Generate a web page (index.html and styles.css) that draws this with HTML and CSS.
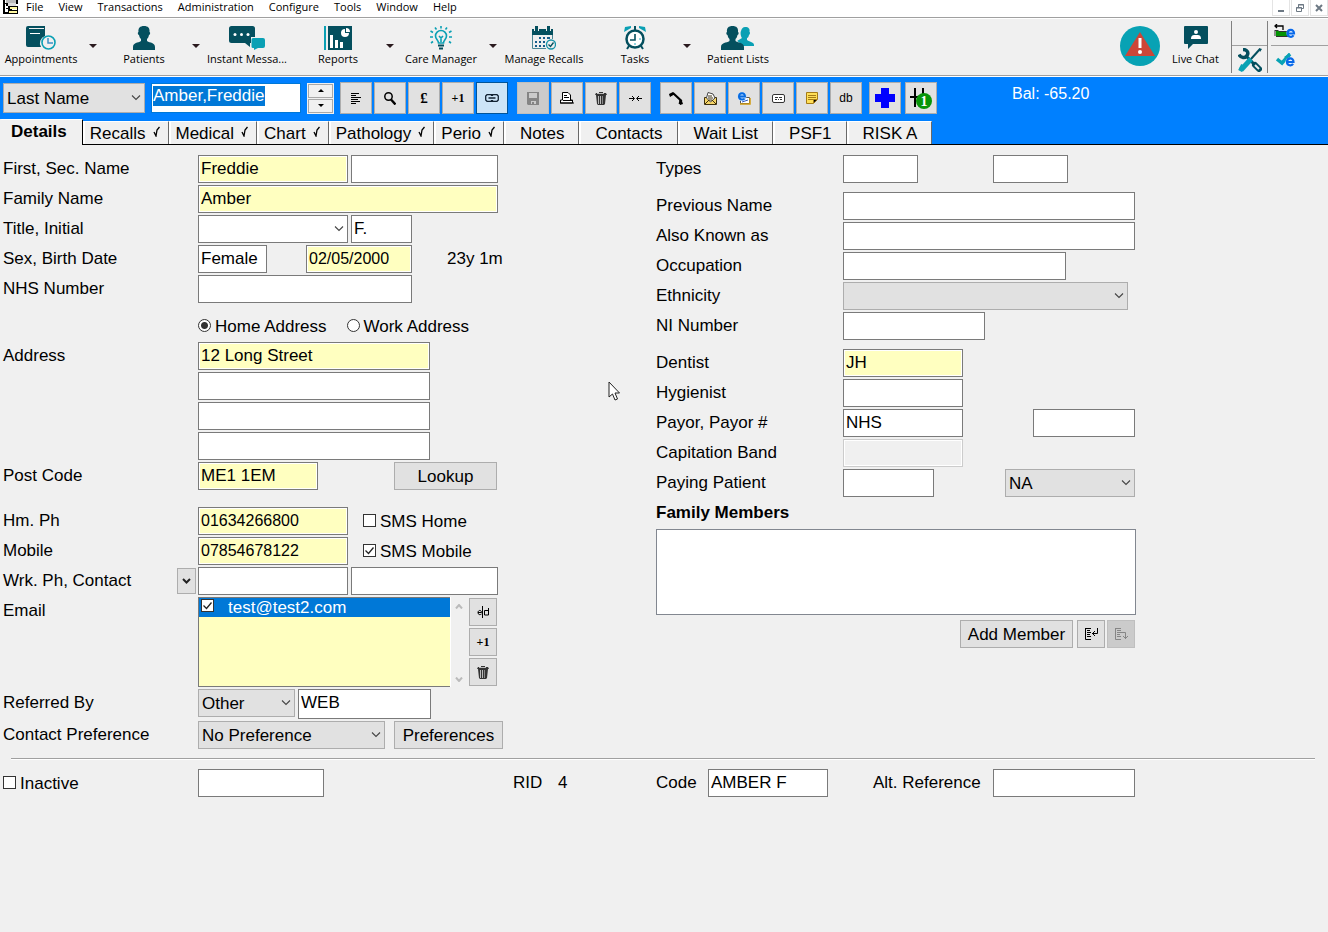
FILE: index.html
```html
<!DOCTYPE html>
<html lang="en">
<head>
<meta charset="utf-8">
<meta name="viewport" content="width=device-width, initial-scale=1">
<title>Patient Details</title>
<link rel="stylesheet" href="styles.css">
</head>
<body>
<header>
  <nav class="menubar" aria-label="Main menu">
    <svg class="app-icon" width="16" height="14" viewBox="0 0 16 14" shape-rendering="crispEdges"><path fill="#000" d="M0 0h2v12h3v2H0zM2 3h3v1H2zM5 6h10v8H5z"/><path fill="#bbb" d="M3 0h10v3H3z"/><path fill="#fff" d="M2 4h3v8H2z"/><path fill="#000" d="M3 3h2v3H3zM13 0h2v4h-2zM3 8h2v1H3z"/><path fill="#ddd" d="M5 3h8v3H5z"/><path fill="#fff8a0" d="M7 7h7v2H7zM6 11h8v2H6z"/><path fill="#fff" d="M9 9h5v1H9z"/></svg>
    <button type="button">File</button><button type="button">View</button><button type="button">Transactions</button><button type="button">Administration</button><button type="button">Configure</button><button type="button">Tools</button><button type="button">Window</button><button type="button">Help</button>
    <span class="window-buttons">
      <button type="button" aria-label="Minimise"><svg width="8" height="8" viewBox="0 0 8 8"><path d="M1 6h6v2H1z" fill="#6d7984"/></svg></button>
      <button type="button" aria-label="Restore"><svg width="8" height="8" viewBox="0 0 8 8" fill="none" stroke="#6d7984"><path d="M2.500 3V.5h5v4H6M2 1h6M.5 3.500h5v4h-5zM0 4h6"/></svg></button>
      <button type="button" aria-label="Close"><svg width="8" height="8" viewBox="0 0 8 8" stroke="#6d7984" stroke-width="2"><path d="M1 1l6 6M7 1L1 7"/></svg></button>
    </span>
  </nav>

  <div class="toolbar" role="toolbar" aria-label="Modules">
    <button type="button" class="tool">
      <svg width="30" height="24" viewBox="0 0 30 24"><path fill="#044f5e" d="M2 0h17v10a7.500 7.500 0 0 0-4 11H2a2 2 0 0 1-2-2V2a2 2 0 0 1 2-2z"/><path stroke="#efefef" d="M3 2.500h15"/><path fill="#fff" d="M4 7h10v1H4z"/><circle cx="22.500" cy="16.500" r="6.500" fill="#efefef" stroke="#0aa0b4" stroke-width="1.600"/><path d="M22 12v5h5" fill="none" stroke="#3a92c8" stroke-width="1.500"/></svg>
      <span>Appointments</span></button>
    <button type="button" class="caret" aria-label="Appointments menu"></button>
    <button type="button" class="tool">
      <svg width="22" height="24" viewBox="0 0 22 24"><path fill="#044f5e" d="M11 0c4 0 6 2 5.500 6 1 0 .8 3-.5 3-.4 2-1 3-2 4v2c3 2 8 1.500 8 6v3H0v-3c0-4.500 5-4 8-6v-2c-1-1-1.600-2-2-4-1.300 0-1.500-3-.5-3C5 2 7 0 11 0z"/></svg>
      <span>Patients</span></button>
    <button type="button" class="caret" aria-label="Patients menu"></button>
    <button type="button" class="tool last">
      <svg width="36" height="24" viewBox="0 0 36 24"><path fill="#044f5e" d="M2.500 0h21A2.500 2.500 0 0 1 26 2.500V11h-4v6h-1v4l-5-4H2.500A2.500 2.500 0 0 1 0 14.500v-12A2.500 2.500 0 0 1 2.500 0z"/><g fill="#fff"><circle cx="6" cy="8.500" r="1.500"/><circle cx="12.500" cy="8.500" r="1.500"/><circle cx="19" cy="8.500" r="1.500"/></g><path fill="#0aa0b4" d="M24 12h10a2 2 0 0 1 2 2v6a2 2 0 0 1-2 2h-5l-4 2v-2h-1a1.500 1.500 0 0 1-1.500-1.500v-7A1.500 1.500 0 0 1 24 12z"/></svg>
      <span>Instant Messa...</span></button>
    <button type="button" class="tool">
      <svg width="28" height="24" viewBox="0 0 28 24"><path fill="#0aa0b4" d="M0 0h2v24H0z"/><path fill="#044f5e" d="M4 0h24v24H4z"/><path fill="#fff" d="M6 9h3v13H6zM11 14h3v8h-3zM16 16h3v6h-3zM21 3v4h4a4 4 0 1 1-4-4zM22 2a4 4 0 0 1 4 4h-4z"/></svg>
      <span>Reports</span></button>
    <button type="button" class="caret" aria-label="Reports menu"></button>
    <button type="button" class="tool">
      <svg width="22" height="24" viewBox="0 0 22 24" fill="none" stroke="#0aa0b4" stroke-width="1.600"><path d="M8.500 17c0-3-3-3.500-3-7a5.500 5.500 0 0 1 11 0c0 3.500-3 4-3 7z"/><path d="M11 0v2.500M5 1.500l1.500 2M17 1.500l-1.500 2M.5 5l2.500 1.500M21.500 5L19 6.500M0 11h3M19 11h3M1 17l2-1.500M21 17l-2-1.500M11 11v5M9 10l2 2 2-2"/><path stroke="#044f5e" stroke-width="2" d="M8 19.500h6M9 22.500h4"/></svg>
      <span>Care Manager</span></button>
    <button type="button" class="caret" aria-label="Care Manager menu"></button>
    <button type="button" class="tool last">
      <svg width="24" height="24" viewBox="0 0 24 24"><path fill="#044f5e" d="M0 3h3V0h3v3h9V0h3v3h3v6H0z"/><path stroke="#efefef" d="M2.500 1v4M6.500 1v4M14.500 1v4M18.500 1v4"/><path fill="#efefef" d="M1 9h19v13H1z"/><path fill="none" stroke="#4c8794" d="M.5 9v13.500H14M20.500 9v4"/><path fill="#175d8a" d="M7 11h2v2H7zM11 11h2v2h-2zM15 11h3v2h-3zM3 15h2v2H3zM7 15h2v2H7zM11 15h2v2h-2zM3 19h2v2H3zM7 19h2v2H7zM11 19h2v2h-2z"/><circle cx="19" cy="18.500" r="4.500" fill="#efefef" stroke="#1792a8" stroke-width="1.300"/><path d="M16.500 18.500l2 2 3-4" fill="none" stroke="#044f5e" stroke-width="1.300"/></svg>
      <span>Manage Recalls</span></button>
    <button type="button" class="tool">
      <svg width="22" height="24" viewBox="0 0 22 24"><path fill="#0aa0b4" d="M0 6l1-5 6-1v2zM22 6l-1-5-6-1v2z"/><path stroke="#044f5e" stroke-width="2" d="M5 20l-2 3M17 20l2 3M11 0v4"/><circle cx="11" cy="13" r="8.500" fill="#fff" stroke="#044f5e" stroke-width="2.500"/><path d="M11 8v6H6" fill="none" stroke="#044f5e" stroke-width="1.600"/><g fill="#0aa0b4"><circle cx="16" cy="13" r=".8"/><circle cx="11" cy="18" r=".8"/></g></svg>
      <span>Tasks</span></button>
    <button type="button" class="caret" aria-label="Tasks menu"></button>
    <button type="button" class="tool">
      <svg width="34" height="24" viewBox="0 0 34 24"><path fill="#0aa0b4" d="M24 1c4 0 5 2 4.500 5 1 0 .5 2.500-.5 3-.5 2-1 3-2 3v2c3 2 7 2 7 5v1H21c0-2-3-4-5-5l5-3c-1-1-2-5-1-7 1-3 2-4 4-4z"/><path fill="#044f5e" d="M11.500 0c4 0 6 2 5.500 6 1 0 .8 3-.5 3-.4 2-1 3-2 4v2c3 2 8.500 1.500 8.500 6v3H0v-3c0-4.500 5.500-4 8.500-6v-2c-1-1-1.600-2-2-4-1.300 0-1.500-3-.5-3-.5-4 1.500-6 5.500-6z"/></svg>
      <span>Patient Lists</span></button>

    <div class="toolbar-end">
      <button type="button" class="alert" aria-label="Alerts"><svg width="40" height="40" viewBox="0 0 40 40"><circle cx="20" cy="20" r="20" fill="#08a2b4"/><path fill="#cc4638" d="M20 6l15 24H5z"/><path stroke="#fff" stroke-width="3" d="M20 12v10"/><circle cx="20" cy="26" r="2" fill="#fff"/></svg></button>
      <button type="button" class="tool chat">
        <svg width="24" height="24" viewBox="0 0 24 24"><path fill="#044f5e" d="M1 0h22a1 1 0 0 1 1 1v16a1 1 0 0 1-1 1H9l-5 5v-5H1a1 1 0 0 1-1-1V1a1 1 0 0 1 1-1z"/><circle cx="12" cy="6" r="2" fill="#fff"/><path fill="#fff" d="M7 13c0-4 2-4 5-4s5 0 5 4z"/></svg>
        <span>Live Chat</span></button>
      <div class="utility tools">
        <span></span>
        <button type="button" aria-label="Settings"><svg width="24" height="24" viewBox="0 0 24 24"><path d="M17 17l4 4" stroke="#044f5e" stroke-width="6" stroke-linecap="round"/><path d="M17 17l4 4" stroke="#efefef" stroke-width="2"/><path d="M8 8l8 8" stroke="#044f5e" stroke-width="3"/><path fill="none" stroke="#044f5e" stroke-width="3.500" d="M5 1.500c4 0 6 3 4 6s-6 2.500-8-1"/><path d="M13 11L22 1" stroke="#044f5e" stroke-width="2"/><path d="M21 0l3 1-2 3z" fill="#044f5e"/><path d="M13 11L3 22" stroke="#08a2b4" stroke-width="5"/><path d="M2 23l3-6" stroke="#08a2b4" stroke-width="4"/></svg></button>
      </div>
      <div class="utility links">
        <button type="button" aria-label="Online upload"><svg width="22" height="14" viewBox="0 0 22 14"><path fill="#059405" d="M2 7h14v5H2z"/><path fill="none" stroke="#333" d="M.5 6.500h4M1 7v5M2 12.500h12M5 7.500h9"/><path fill="none" stroke="#000" stroke-width="1.300" d="M1 2h8v4M3 0L1 2l2 2"/><circle cx="17" cy="9" r="4.500" fill="#e8f1ff"/><path fill="none" stroke="#0868e8" stroke-width="2.200" d="M13.500 9.500h6.500c0-5-6.500-4.500-6.500 0 0 4 5 4 6 1.800"/></svg></button>
        <button type="button" aria-label="Online confirm"><svg width="20" height="14" viewBox="0 0 20 14"><path fill="none" stroke="#08a2b4" stroke-width="3.500" d="M1 6l5 4 8-9"/><path fill="#08a2b4" d="M8 4l6-4v7z"/><circle cx="14" cy="9" r="4.500" fill="#e8f1ff"/><path fill="none" stroke="#0868e8" stroke-width="2.200" d="M11 9h6.500c0-5-6.500-4.500-6.500 0 0 4 5 4 6 1.800"/></svg></button>
      </div>
    </div>
  </div>

  <div class="patient-band">
    <div class="patient-bar">
      <select class="search-by" aria-label="Search by"><option>Last Name</option></select>
      <span class="name-box"><input type="text" value="Amber,Freddie" size="12" aria-label="Patient name"></span>
      <span class="spinner"><button type="button" aria-label="Previous patient"><svg width="6" height="3"><path d="M0 3l3-3 3 3z"/></svg></button><button type="button" aria-label="Next patient"><svg width="6" height="3"><path d="M0 0l3 3 3-3z"/></svg></button></span>
      <div class="actions">
        <button type="button" class="sq" aria-label="List"><svg width="10" height="11" viewBox="0 0 10 11" stroke="#000" shape-rendering="crispEdges"><path d="M0 .5h8M0 2.500h5M0 4.500h10M0 6.500h7M0 8.500h9M0 10.500h5"/></svg></button>
        <button type="button" class="sq" aria-label="Search"><svg width="12" height="13" viewBox="0 0 12 13" fill="none" stroke="#000"><circle cx="4.500" cy="4.500" r="3.700" stroke-width="1.500"/><path stroke-width="2.400" d="M7 7.500l4.500 5"/></svg></button>
        <button type="button" class="sq mark pound">£</button>
        <button type="button" class="sq mark">+1</button>
        <button type="button" class="sq active" aria-label="Link"><svg width="14" height="8" viewBox="0 0 14 8" fill="none" stroke="#123"><path stroke-width="1.300" d="M6.500 2V.7H2L.7 2v4L2 7.300h4.500V6M7.500 2V.7H12L13.300 2v4L12 7.300H7.500V6M3.500 4h7"/></svg></button>
      </div>
      <div class="actions">
        <button type="button" class="sq off" aria-label="Save" disabled><svg width="12" height="13" viewBox="0 0 12 13"><path fill="#858585" d="M0 0h12v13H1l-1-1z"/><path fill="#cbcbcb" d="M2 1h8v5H2zM4 9h5v3H7v-2H5v2H4z"/></svg></button>
        <button type="button" class="sq" aria-label="Print"><svg width="14" height="12" viewBox="0 0 14 12"><path fill="#fff" stroke="#000" d="M2.500 8V.5H8L10.500 3v5h2v3H.5V8z"/><path stroke="#000" d="M4 3.500h3M4 5.500h5M3 8.500h9M0 11h14"/></svg></button>
        <button type="button" class="sq" aria-label="Delete"><svg width="12" height="13" viewBox="0 0 12 13"><path fill="#333" d="M4 0h4v1h3l1 2H0l1-2h3zM1 3h10l-1 9-1 1H3l-1-1z"/><path stroke="#bbb" d="M3.500 4v8M5.500 4v8M2 1.500h7"/><path stroke="#888" d="M7.500 4v8"/></svg></button>
        <button type="button" class="sq" aria-label="Merge"><svg width="13" height="7" viewBox="0 0 13 7" fill="none" stroke="#000"><path d="M0 3.500h5M3 1l2.500 2.500L3 6M13 3.500H8M10 1L7.500 3.500 10 6"/></svg></button>
      </div>
      <div class="actions">
        <button type="button" class="sq" aria-label="Phone"><svg width="14" height="13" viewBox="0 0 14 13"><path fill="none" stroke="#000" stroke-width="2.200" d="M1 3.500L4.500 1.500l7.500 7-1.500 3.500"/><path fill="#000" d="M0 2l4-2 1 2-4 3zM10 8l3 1 1 3-3 1z"/></svg></button>
        <button type="button" class="sq" aria-label="Letter"><svg width="13" height="13" viewBox="0 0 13 13"><path fill="#f6d568" stroke="#3d3010" d="M.5 5.500h12v7H.5z"/><path fill="#fff" stroke="#444" d="M4 .5l5 1.500 2 4-4.500 4L2.500 6z"/><path fill="none" stroke="#3d3010" d="M4 4h4M4 6h5M1 12l4-4h3l4 4"/></svg></button>
        <button type="button" class="sq" aria-label="Email"><svg width="14" height="13" viewBox="0 0 14 13"><path fill="#fff" stroke="#555" d="M3.500 5.500h9v6h-9z"/><path fill="none" stroke="#d09a10" stroke-width="1.500" d="M3 12h10V6"/><circle cx="5" cy="4.500" r="4.500" fill="#bcdcff"/><path fill="none" stroke="#086be0" stroke-width="2" d="M2 4.500h6c0-4.500-6-4-6 0 0 3.500 4.500 3.500 5.500 2"/><path d="M5 10l6-2" stroke="#2e5bc4"/></svg></button>
        <button type="button" class="sq" aria-label="SMS"><svg width="13" height="9" viewBox="0 0 13 9"><rect x=".5" y=".5" width="12" height="8" rx="1.500" fill="#fff" stroke="#333"/><path stroke="#333" d="M3 3.500h3M7 3.500h3M3 5.500h2M6 5.500h1M8 5.500h2"/></svg></button>
        <button type="button" class="sq" aria-label="Note"><svg width="12" height="12" viewBox="0 0 12 12"><path fill="#ffdf57" stroke="#a57b16" d="M.5.5h11v7l-4 4h-7z"/><path stroke="#a57b16" d="M2 3.500h8M2 5.500h8M2 7.500h5M7.500 11V7.500H11"/></svg></button>
        <button type="button" class="sq db">db</button>
      </div>
      <div class="actions spaced">
        <button type="button" class="sq" aria-label="Medical alert"><svg width="20" height="20" viewBox="0 0 20 20"><path fill="#00f" d="M6 0h8v6h6v8h-6v6H6v-6H0V6h6z"/></svg></button>
        <button type="button" class="sq" aria-label="Plan, 1 item"><svg width="22" height="22" viewBox="0 0 22 22"><path stroke="#000" stroke-width="2" d="M5 1v19M13 1v6M0 10h8"/><circle cx="14" cy="14" r="8" fill="#089508"/><text x="14" y="19" class="badge-text" text-anchor="middle">1</text></svg></button>
      </div>
      <output class="balance">Bal: -65.20</output>
    </div>
    <div class="tabs" role="tablist">
      <button type="button" role="tab" aria-selected="true" class="tab current">Details</button>
      <button type="button" role="tab" class="tab ticked">Recalls <svg width="8" height="11"><path d="M1 6l2 4L4 4l2.500-3"/></svg></button>
      <button type="button" role="tab" class="tab ticked">Medical <svg width="8" height="11"><path d="M1 6l2 4L4 4l2.500-3"/></svg></button>
      <button type="button" role="tab" class="tab ticked">Chart <svg width="8" height="11"><path d="M1 6l2 4L4 4l2.500-3"/></svg></button>
      <button type="button" role="tab" class="tab ticked">Pathology <svg width="8" height="11"><path d="M1 6l2 4L4 4l2.500-3"/></svg></button>
      <button type="button" role="tab" class="tab ticked">Perio <svg width="8" height="11"><path d="M1 6l2 4L4 4l2.500-3"/></svg></button>
      <button type="button" role="tab" class="tab">Notes</button>
      <button type="button" role="tab" class="tab">Contacts</button>
      <button type="button" role="tab" class="tab">Wait List</button>
      <button type="button" role="tab" class="tab">PSF1</button>
      <button type="button" role="tab" class="tab">RISK A</button>
    </div>
  </div>
</header>

<main>
  <form>
    <div class="columns">
      <section class="fields" aria-label="Personal details">
        <div class="row"><label for="first">First, Sec. Name</label><div class="controls"><input id="first" class="hl w150" value="Freddie"><input class="w147" aria-label="Second name"></div></div>
        <div class="row"><label for="family">Family Name</label><div class="controls"><input id="family" class="hl w300" value="Amber"></div></div>
        <div class="row"><label for="title">Title, Initial</label><div class="controls"><select id="title" class="w150 light"><option></option></select><input class="w61" value="F." aria-label="Initial"></div></div>
        <div class="row"><label for="sex">Sex, Birth Date</label><div class="controls"><span class="cell108"><input id="sex" class="w69" value="Female"></span><input class="hl num w106" value="02/05/2000" aria-label="Birth date"><span class="age">23y 1m</span></div></div>
        <div class="row"><label for="nhs">NHS Number</label><div class="controls"><input id="nhs" class="w214"></div></div>
        <div class="row gap-s"><span></span><div class="controls radios"><label><input type="radio" name="addr" checked>Home Address</label><label><input type="radio" name="addr">Work Address</label></div></div>
        <div class="row"><label for="a1">Address</label><div class="controls stack"><input id="a1" class="hl w232" value="12 Long Street"><input class="w232" aria-label="Address line 2"><input class="w232" aria-label="Address line 3"><input class="w232" aria-label="Address line 4"></div></div>
        <div class="row"><label for="post">Post Code</label><div class="controls"><span class="cell196"><input id="post" class="hl w120" value="ME1 1EM"></span><button type="button" class="push w103">Lookup</button></div></div>
        <div class="row gap-m"><label for="hm">Hm. Ph</label><div class="controls"><input id="hm" class="hl num w150" value="01634266800"><label class="sms"><input type="checkbox">SMS Home</label></div></div>
        <div class="row"><label for="mob">Mobile</label><div class="controls"><input id="mob" class="hl num w150" value="07854678122"><label class="sms"><input type="checkbox" checked>SMS Mobile</label></div></div>
        <div class="row"><span class="label-with-button"><label for="wrk">Wrk. Ph, Contact</label><button type="button" class="drop" aria-label="Choose work phone"><svg width="9" height="6" fill="none" stroke="#222" stroke-width="2"><path d="M1 1l3.500 3.500L8 1"/></svg></button></span><div class="controls"><input id="wrk" class="w150"><input class="w147" aria-label="Work contact"></div></div>
        <div class="row"><span class="label">Email</span><div class="controls emails">
          <div class="email-list"><label><input type="checkbox" checked>test@test2.com</label></div>
          <div class="scroll"><svg width="8" height="5"><path d="M1 4.500L4 1l3 3.500"/></svg><svg width="8" height="5"><path d="M1 .5L4 4l3-3.500"/></svg></div>
          <div class="side">
            <button type="button" class="mini" aria-label="Edit email"><svg width="12" height="12" viewBox="0 0 12 12" fill="none" stroke="#000"><path d="M5.500 0v12M1 6.500h3.500c0-3-3.500-2.500-3.500 0s2 2.500 3.500 1.500M11.500 2v7H7.500V4.500h4"/></svg></button>
            <button type="button" class="mini mark">+1</button>
            <button type="button" class="mini" aria-label="Delete email"><svg width="12" height="13" viewBox="0 0 12 13"><path fill="#333" d="M4 0h4v1h3l1 2H0l1-2h3zM1 3h10l-1 9-1 1H3l-1-1z"/><path stroke="#bbb" d="M3.500 4v8M5.500 4v8M2 1.500h7"/><path stroke="#888" d="M7.500 4v8"/></svg></button>
          </div></div></div>
        <div class="row"><label for="ref">Referred By</label><div class="controls"><select id="ref" class="w97"><option>Other</option></select><input class="w133 tall" value="WEB" aria-label="Referrer"></div></div>
        <div class="row"><label for="pref">Contact Preference</label><div class="controls"><span class="cell196"><select id="pref" class="w187"><option>No Preference</option></select></span><button type="button" class="push w109">Preferences</button></div></div>
      </section>

      <section class="fields right" aria-label="Practice details">
        <div class="row"><label for="types">Types</label><div class="controls"><span class="cell150"><input id="types" class="w75"></span><input class="w75" aria-label="Second type"></div></div>
        <div class="row gap-s"><label for="prev">Previous Name</label><div class="controls"><input id="prev" class="w292"></div></div>
        <div class="row"><label for="aka">Also Known as</label><div class="controls"><input id="aka" class="w292"></div></div>
        <div class="row"><label for="occ">Occupation</label><div class="controls"><input id="occ" class="w223"></div></div>
        <div class="row"><label for="eth">Ethnicity</label><div class="controls"><select id="eth" class="w285"><option></option></select></div></div>
        <div class="row"><label for="ni">NI Number</label><div class="controls"><input id="ni" class="w142"></div></div>
        <div class="row gap-s"><label for="dent">Dentist</label><div class="controls"><input id="dent" class="hl w120" value="JH"></div></div>
        <div class="row"><label for="hyg">Hygienist</label><div class="controls"><input id="hyg" class="w120"></div></div>
        <div class="row"><label for="payor">Payor, Payor #</label><div class="controls spread"><input id="payor" class="w120" value="NHS"><input class="w102" aria-label="Payor number"></div></div>
        <div class="row"><label for="cap">Capitation Band</label><div class="controls"><input id="cap" class="w120" disabled></div></div>
        <div class="row"><label for="pay">Paying Patient</label><div class="controls spread"><input id="pay" class="w91"><select class="w130" aria-label="Paying status"><option>NA</option></select></div></div>
        <label class="heading" for="members">Family Members</label>
        <textarea id="members" class="members"></textarea>
        <div class="member-actions"><button type="button" class="push w113">Add Member</button><button type="button" class="mini" aria-label="Open member"><svg width="14" height="12" viewBox="0 0 14 12" fill="none" stroke="#000"><path d="M1.500 0v11.500H7M1 .5h6M3 2.500h3M3 4.500h4M3 6.500h3M3 8.500h4M13.500 0v5.500H8M11 3L8.500 5.500 11 8"/></svg></button><button type="button" class="mini off" aria-label="Move member" disabled><svg width="14" height="12" viewBox="0 0 14 12" fill="none" stroke="#858585"><path d="M1.500 0v11.500H7M1 .5h6M3 2.500h4M3 4.500h5M3 6.500h3M3 8.500h4M8 4.500h3.500V11M9 8l2.500 2.500L14 8"/></svg></button></div>
      </section>
    </div>

    <hr>

    <div class="columns footer-row">
      <div class="row"><label class="inactive"><input type="checkbox">Inactive</label><div class="controls"><input class="w126" aria-label="Inactive reason"><span class="rid">RID</span><span class="rid-value">4</span></div></div>
      <div class="references"><label for="code">Code</label><input id="code" class="w120" value="AMBER F"><label for="alt" class="alt">Alt. Reference</label><input id="alt" class="w142"></div>
    </div>
  </form>
</main>
<svg class="pointer" width="13" height="20" viewBox="0 0 13 20" aria-hidden="true"><path fill="#fff" stroke="#222" d="M1 1v15l3.500-3L7 19l2.500-1L7 12h4.500z"/></svg>
</body>
</html>
```
FILE: styles.css
```css
* { box-sizing: border-box; }

body {
  margin: 0;
  background: #f0f0f0;
  color: #000;
  font: 17px/20px "Liberation Sans", Arial, sans-serif;
}

button, input, select, textarea { margin: 0; font: inherit; color: inherit; border-radius: 0; }
button { padding: 0; border: 0; background: none; white-space: nowrap; }
svg { display: block; flex: none; }

/* Menu bar */
.menubar {
  display: flex;
  align-items: flex-start;
  gap: 15px;
  height: 18px;
  padding-left: 3px;
  background: #fff;
  border-bottom: 1px solid #a0a0a0;
  font: 11px/14px "Open Sans", "Noto Sans", sans-serif;
}
.app-icon { margin-right: -8px; }
.window-buttons { display: flex; gap: 1px; margin-left: auto; }
.window-buttons button {
  display: grid;
  place-items: center;
  width: 18px;
  height: 16px;
  border: 1px solid #e4e4e4;
  border-top: 0;
}

/* Module toolbar */
.toolbar {
  display: flex;
  align-items: flex-start;
  gap: 1px;
  height: 58px;
  padding-top: 7px;
  border-top: 1px solid #fff;
  border-bottom: 1px solid #a0a0a0;
  font: 11px/17px "Open Sans", "Noto Sans", sans-serif;
}
.tool {
  display: flex;
  flex-direction: column;
  align-items: center;
  width: 82px;
  flex: none;
}
.tool.last { margin-right: 8px; }
.caret { width: 19px; height: 40px; display: grid; place-items: center; flex: none; }
.caret::before {
  content: "";
  border: 4px solid transparent;
  border-top-color: #2a1a1e;
  border-bottom: 0;
}
.toolbar-end { display: flex; align-items: flex-start; margin-left: auto; }
.tool.chat { width: 71px; }
.utility {
  display: grid;
  grid-template-rows: 24px 28px;
  place-items: center;
  height: 52px;
  margin-top: -5px;
  border-left: 1px solid #808080;
}
.utility > :last-child {
  width: 100%;
  height: 28px;
  display: grid;
  place-items: center;
  border-top: 1px solid #a0a0a0;
}
.tools { width: 36px; }
.links { width: 61px; padding-left: 3px; }
.links button { width: 100%; padding: 0 0 4px 3px; display: grid; justify-items: start; }
.utility.links > :last-child { justify-items: start; align-items: center; padding: 0 0 0 5px; }

/* Patient band */
.patient-band {
  background: #0080ff;
  border-top: 1px solid #fff;
  border-bottom: 1px solid #000;
  padding-top: 5px;
}
.patient-bar { display: flex; align-items: center; height: 32px; padding-left: 3px; }
.search-by { width: 142px; height: 30px; }
.name-box {
  display: flex;
  align-items: flex-start;
  width: 150px;
  height: 30px;
  margin: 0 6px;
  padding: 2px 1px;
  background: #fff;
  border: 1px solid #0078d7;
}
.name-box input {
  field-sizing: content;
  height: 20px;
  padding: 0;
  border: 0;
  outline: 0;
  background: #0078d7;
  color: #fff;
  box-shadow: none;
}
.spinner { display: grid; gap: 1px; width: 27px; height: 31px; padding: 1px; background: #f0f0f0; margin-right: 6px; }
.spinner button { display: grid; place-items: center; border: 1px solid #a8a8a8; background: #f0f0f0; }
.actions { display: flex; gap: 2px; margin-right: 9px; }
.actions.spaced { gap: 4px; margin-left: -2px; }
.sq, .mini {
  display: grid;
  place-items: center;
  width: 32px;
  height: 32px;
  background: #e1e1e1;
  border: 1px solid #adadad;
}
.mini { width: 28px; height: 28px; }
.mark { font: bold 12px/14px "Liberation Serif", "Times New Roman", serif; }
.pound { font-size: 15px; }
.db { font: 12px/16px "Liberation Sans", Arial, sans-serif; }
.sq.active { background: #cce4f7; border-color: #005499; }
.off { background: #cbcbcb; border-color: #bfbfbf; }
.badge-text { font: bold 14px "Liberation Serif", serif; fill: #fff; }
.balance { margin: 0 0 9px 66px; color: #fff; font-size: 16px; }

/* Tabs */
.tabs { display: flex; align-items: flex-end; margin-top: 5px; height: 25px; }
.tab {
  height: 23px;
  padding: 1px 14px 0;
  background: #f0f0f0;
  border: 2px solid #fff;
  border-width: 1px 2px 0 2px;
  border-right: 1px solid #696969;
  line-height: 22px;
}
.tab.ticked { display: flex; align-items: center; gap: 7px; padding: 1px 7px 0 5px; }
.tab.ticked svg { margin-bottom: 4px; fill: none; stroke: #000; stroke-width: 1.300; }
.tab.current {
  height: 26px;
  margin-bottom: -1px;
  padding: 0 15px 2px 9px;
  border-left-color: #f0f0f0;
  border-right-color: #000;
  font-weight: bold;
}

/* Form */
main { padding: 10px 13px 24px 3px; }
.columns { display: grid; grid-template-columns: minmax(520px, 653fr) minmax(490px, 659fr); }
.fields { display: flex; flex-direction: column; align-items: flex-start; gap: 2px; }
.row { display: grid; grid-template-columns: 195px auto; align-items: start; }
.right .row { grid-template-columns: 187px auto; }
.row > label, .label, .label-with-button { line-height: 27px; }
.gap-s { margin-top: 7px; }
.gap-m { margin-top: 15px; }
.controls { display: flex; gap: 3px; min-height: 28px; }
.stack { flex-direction: column; gap: 2px; }
.spread { width: 292px; justify-content: space-between; }
.age { margin-left: 32px; line-height: 27px; }

input, select, textarea {
  height: 28px;
  padding: 0 2px 1px;
  background: #fff;
  border: 1px solid #7a7a7a;
  box-shadow: inset 0 0 0 1px #fff;
}
input.hl { background: #ffffc0; }
input.num { font-size: 16px; }
input.tall { height: 30px; padding-bottom: 3px; }
input:disabled { background: #f0f0f0; border-color: #ccc; }
select {
  appearance: none;
  padding: 1px 20px 0 3px;
  border-color: #adadad;
  box-shadow: none;
  background: #e1e1e1 url("data:image/svg+xml,%3Csvg xmlns='http://www.w3.org/2000/svg' width='10' height='6'%3E%3Cpath d='M1 .5l4 4 4-4' fill='none' stroke='%23444' stroke-width='1.100'/%3E%3C/svg%3E") right 3px center no-repeat;
}
select.light { background-color: #fff; border-color: #7a7a7a; }

input[type="checkbox"], input[type="radio"] {
  appearance: none;
  flex: none;
  width: 13px;
  height: 13px;
  margin: 0 4px 2px 0;
  padding: 0;
  border: 1px solid #333;
  box-shadow: none;
}
input[type="radio"] { border-radius: 50%; }
input[type="radio"]:checked { background: radial-gradient(circle, #333 0 3px, #fff 4px); }
input[type="checkbox"]:checked {
  background: #fff url("data:image/svg+xml,%3Csvg xmlns='http://www.w3.org/2000/svg' width='11' height='11'%3E%3Cpath d='M1.500 5.500l3 3 5-6' fill='none' stroke='%23222' stroke-width='1.300'/%3E%3C/svg%3E") center no-repeat;
}
.radios { gap: 20px; }
.radios label, .sms, .inactive { display: flex; align-items: center; height: 29px; }
.sms { margin-left: 12px; height: 28px; padding-top: 1px; }

.push { height: 28px; padding-top: 1px; background: #e1e1e1; border: 1px solid #adadad; }
.label-with-button { display: flex; justify-content: space-between; padding-right: 2px; }
.drop { display: grid; place-items: center; width: 19px; height: 26px; margin-top: 1px; background: #e1e1e1; border: 1px solid #adadad; }
.radios { height: 28px; }

.emails { gap: 0; }
.email-list { width: 252px; height: 90px; background: #ffffc0; border: 1px solid #7a7a7a; border-right: 0; }
.email-list label { display: flex; gap: 10px; height: 19px; padding-left: 2px; background: #0078d7; color: #fff; }
.email-list input[type="checkbox"] { margin-top: 1px; }
.scroll { display: flex; flex-direction: column; justify-content: space-between; width: 19px; padding: 7px 0 5px 4px; border-left: 1px solid #fff; }
.scroll svg { fill: none; stroke: #bbb; stroke-width: 2; }
.side { display: grid; gap: 2px; padding-top: 1px; align-content: start; }

.heading { font-weight: bold; line-height: 28px; }
.members { width: 480px; height: 86px; border-color: #828790; resize: none; }
.member-actions { display: flex; justify-content: flex-end; gap: 2px; width: 479px; margin-top: 3px; }
.member-actions .push { margin-right: 2px; }

hr { height: 2px; margin: 9px 0 9px 8px; border: 0; border-top: 1px solid #a0a0a0; border-bottom: 1px solid #fff; }
.rid { width: 42px; margin-left: 186px; line-height: 27px; }
.rid-value { line-height: 27px; }
.references { display: grid; grid-template-columns: 52px 165px 120px auto; justify-content: start; line-height: 27px; }

.cell108 { width: 105px; }
.cell150 { width: 147px; }
.cell196 { width: 193px; }
.w61 { width: 61px; }
.w69 { width: 69px; }
.w75 { width: 75px; }
.w91 { width: 91px; }
.w97 { width: 97px; }
.w102 { width: 102px; }
.w103 { width: 103px; }
.w106 { width: 106px; }
.w109 { width: 109px; }
.w113 { width: 113px; }
.w120 { width: 120px; }
.w126 { width: 126px; }
.w130 { width: 130px; }
.w133 { width: 133px; }
.w142 { width: 142px; }
.w147 { width: 147px; }
.w150 { width: 150px; }
.w187 { width: 187px; }
.w214 { width: 214px; }
.w223 { width: 223px; }
.w232 { width: 232px; }
.w285 { width: 285px; }
.w292 { width: 292px; }
.w300 { width: 300px; }

/* Mouse pointer over the form */
.pointer { position: absolute; left: 608px; top: 381px; }
```
